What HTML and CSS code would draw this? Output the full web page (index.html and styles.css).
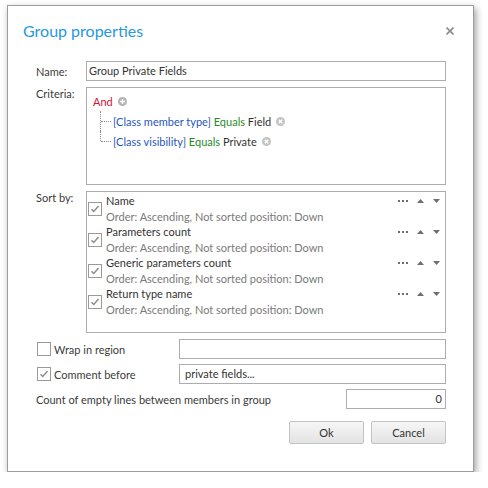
FILE: index.html
```html
<!DOCTYPE html>
<html>
<head>
<meta charset="utf-8">
<link rel="stylesheet" href="styles.css">
</head>
<body>
<div class="dialog">
  <div class="titlebar">
    <span class="title">Group properties</span>
    <svg class="close" width="8" height="8" viewBox="0 0 8 8"><path d="M0.5 0.5L7.5 7.5M7.5 0.5L0.5 7.5" stroke="#8c8c8c" stroke-width="1.6"/></svg>
  </div>
  <div class="body">
    <div class="fields">
      <div class="label">Name:</div>
      <div class="input name-input">Group Private Fields</div>

      <div class="label top">Criteria:</div>
      <div class="box criteria">
        <div class="crit-row"><span class="op">And</span>
          <svg class="circ" width="9" height="9" viewBox="0 0 9 9"><circle cx="4.5" cy="4.5" r="4.5" fill="#b4b4b4"/><path d="M4.5 2V7M2 4.5H7" stroke="#fff" stroke-width="1.4"/></svg>
        </div>
        <div class="tree">
          <div class="crit-row node"><span class="expr"><span class="fld">[Class member type]</span> <span class="eq">Equals</span> <span class="val">Field</span></span>
            <svg class="circ" width="9" height="9" viewBox="0 0 9 9"><circle cx="4.5" cy="4.5" r="4.5" fill="#c4c4c4"/><path d="M2.8 2.8L6.2 6.2M6.2 2.8L2.8 6.2" stroke="#fff" stroke-width="1.3"/></svg>
          </div>
          <div class="crit-row node last"><span class="expr"><span class="fld">[Class visibility]</span> <span class="eq">Equals</span> <span class="val">Private</span></span>
            <svg class="circ" width="9" height="9" viewBox="0 0 9 9"><circle cx="4.5" cy="4.5" r="4.5" fill="#c4c4c4"/><path d="M2.8 2.8L6.2 6.2M6.2 2.8L2.8 6.2" stroke="#fff" stroke-width="1.3"/></svg>
          </div>
        </div>
      </div>

      <div class="label top sortlabel">Sort by:</div>
      <div class="box sortbox">
        <div class="sort-item">
          <span class="check on"><svg width="12" height="12" viewBox="0 0 12 12"><path d="M2.5 6.2L4.8 8.5L9.5 3" fill="none" stroke="#8a8a8a" stroke-width="1.4"/></svg></span>
          <span class="s-name">Name</span>
          <span class="s-tools"><svg width="42" height="6" viewBox="0 0 42 6"><rect x="0" y="2" width="2" height="2" fill="#6e6e6e"/><rect x="4" y="2" width="2" height="2" fill="#6e6e6e"/><rect x="8" y="2" width="2" height="2" fill="#6e6e6e"/><path d="M19 5H26L22.5 1Z" fill="#6e6e6e"/><path d="M35 1H42L38.5 5Z" fill="#6e6e6e"/></svg></span>
          <span class="s-desc">Order: Ascending, Not sorted position: Down</span>
        </div>
        <div class="sort-item">
          <span class="check on"><svg width="12" height="12" viewBox="0 0 12 12"><path d="M2.5 6.2L4.8 8.5L9.5 3" fill="none" stroke="#8a8a8a" stroke-width="1.4"/></svg></span>
          <span class="s-name">Parameters count</span>
          <span class="s-tools"><svg width="42" height="6" viewBox="0 0 42 6"><rect x="0" y="2" width="2" height="2" fill="#6e6e6e"/><rect x="4" y="2" width="2" height="2" fill="#6e6e6e"/><rect x="8" y="2" width="2" height="2" fill="#6e6e6e"/><path d="M19 5H26L22.5 1Z" fill="#6e6e6e"/><path d="M35 1H42L38.5 5Z" fill="#6e6e6e"/></svg></span>
          <span class="s-desc">Order: Ascending, Not sorted position: Down</span>
        </div>
        <div class="sort-item">
          <span class="check on"><svg width="12" height="12" viewBox="0 0 12 12"><path d="M2.5 6.2L4.8 8.5L9.5 3" fill="none" stroke="#8a8a8a" stroke-width="1.4"/></svg></span>
          <span class="s-name">Generic parameters count</span>
          <span class="s-tools"><svg width="42" height="6" viewBox="0 0 42 6"><rect x="0" y="2" width="2" height="2" fill="#6e6e6e"/><rect x="4" y="2" width="2" height="2" fill="#6e6e6e"/><rect x="8" y="2" width="2" height="2" fill="#6e6e6e"/><path d="M19 5H26L22.5 1Z" fill="#6e6e6e"/><path d="M35 1H42L38.5 5Z" fill="#6e6e6e"/></svg></span>
          <span class="s-desc">Order: Ascending, Not sorted position: Down</span>
        </div>
        <div class="sort-item">
          <span class="check on"><svg width="12" height="12" viewBox="0 0 12 12"><path d="M2.5 6.2L4.8 8.5L9.5 3" fill="none" stroke="#8a8a8a" stroke-width="1.4"/></svg></span>
          <span class="s-name">Return type name</span>
          <span class="s-tools"><svg width="42" height="6" viewBox="0 0 42 6"><rect x="0" y="2" width="2" height="2" fill="#6e6e6e"/><rect x="4" y="2" width="2" height="2" fill="#6e6e6e"/><rect x="8" y="2" width="2" height="2" fill="#6e6e6e"/><path d="M19 5H26L22.5 1Z" fill="#6e6e6e"/><path d="M35 1H42L38.5 5Z" fill="#6e6e6e"/></svg></span>
          <span class="s-desc">Order: Ascending, Not sorted position: Down</span>
        </div>
      </div>
    </div>

    <div class="options">
      <div class="opt-row">
        <div class="opt-check"><span class="check"></span><span>Wrap in region</span></div>
        <div class="input"></div>
      </div>
      <div class="opt-row">
        <div class="opt-check"><span class="check on"><svg width="12" height="12" viewBox="0 0 12 12"><path d="M2.5 6.2L4.8 8.5L9.5 3" fill="none" stroke="#8a8a8a" stroke-width="1.4"/></svg></span><span>Comment before</span></div>
        <div class="input comment">private fields...</div>
      </div>
      <div class="opt-row count-row">
        <div class="count-label">Count of empty lines between members in group</div>
        <div class="input num">0</div>
      </div>
    </div>

    <div class="buttons">
      <div class="btn">Ok</div>
      <div class="btn">Cancel</div>
    </div>
  </div>
</div>
</body>
</html>
```
FILE: styles.css
```css
html, body {
  margin: 0;
  padding: 0;
  background: #ffffff;
}
body {
  font-family: Lato, "Noto Sans", sans-serif;
  font-size: 11px;
  color: #3b3b3b;
}
.dialog {
  margin: 5px 0 0 7px;
  width: 465px;
  height: 465px;
  border: 1px solid #9c9c9c;
  background: #fff;
  box-shadow: 2px 3px 7px rgba(0, 0, 0, 0.38);
}
.titlebar {
  height: 55px;
  box-sizing: border-box;
  padding: 13px 19px 0 15px;
  display: flex;
  justify-content: space-between;
  align-items: flex-start;
}
.title {
  font-size: 16px;
  line-height: 24px;
  color: #2598e0;
}
.close {
  margin-top: 8px;
}
.body {
  padding: 0 27px 0 28px;
}
.fields {
  display: grid;
  grid-template-columns: 50px 1fr;
  row-gap: 6px;
}
.label {
  display: flex;
  align-items: center;
  height: 20px;
}
.label.top {
  height: auto;
  align-items: flex-start;
  line-height: 13px;
}
.input {
  height: 20px;
  box-sizing: border-box;
  border: 1px solid #acacac;
  padding: 0 3px;
  line-height: 18px;
  color: #333;
  white-space: nowrap;
}
.name-input {
  padding-left: 2px;
}
.box {
  border: 1px solid #acacac;
  box-sizing: border-box;
}
.criteria {
  height: 98px;
  padding: 3px 0 0 6px;
}
.crit-row {
  display: flex;
  align-items: center;
  height: 20px;
}
.expr {
  white-space: pre;
}
.crit-row .circ {
  margin-left: 5px;
}
.op { color: #d2123a; }
.fld { color: #1f56c0; }
.eq { color: #268a26; }
.val { color: #333; }
.tree {
  margin-left: 7px;
}
.node {
  position: relative;
  padding-left: 13px;
}
.node::before {
  content: "";
  position: absolute;
  left: 0;
  top: 0;
  height: 100%;
  border-left: 1px dotted #8a8a8a;
}
.node.last::before {
  height: 50%;
}
.node::after {
  content: "";
  position: absolute;
  left: 1px;
  top: 50%;
  width: 10px;
  border-top: 1px dotted #8a8a8a;
}
.sortbox {
  height: 142px;
  padding: 1px 5px 0 1px;
}
.sort-item {
  display: grid;
  grid-template-columns: 14px 1fr auto;
  grid-template-rows: 15.5px 15.5px;
  column-gap: 4px;
  line-height: 15.5px;
}
.sort-item .check {
  grid-row: 1 / 3;
  align-self: center;
}
.s-name { color: #333; }
.s-desc {
  grid-column: 2 / 4;
  color: #7a7a7a;
  white-space: nowrap;
}
.s-tools {
  display: flex;
  align-items: center;
}
.check {
  width: 14px;
  height: 14px;
  box-sizing: border-box;
  border: 1px solid #9a9a9a;
  background: #fff;
  display: flex;
  align-items: center;
  justify-content: center;
}
.options {
  margin-top: 6px;
  display: flex;
  flex-direction: column;
  gap: 5px;
}
.opt-row {
  display: grid;
  grid-template-columns: 143px 1fr;
  height: 20px;
}
.opt-check {
  display: flex;
  align-items: center;
  gap: 3px;
  padding-left: 1px;
}
.comment {
  padding-left: 5px;
}
.count-row {
  grid-template-columns: 1fr 100px;
}
.count-label {
  display: flex;
  align-items: center;
}
.num {
  text-align: right;
  padding-right: 3px;
}
.buttons {
  margin-top: 12px;
  display: flex;
  justify-content: flex-end;
  gap: 7px;
}
.btn {
  width: 75px;
  height: 23px;
  box-sizing: border-box;
  border: 1px solid #c3c3c3;
  border-radius: 2px;
  background: linear-gradient(#f6f6f6, #e3e3e3);
  display: flex;
  align-items: center;
  justify-content: center;
  color: #333;
}
```
